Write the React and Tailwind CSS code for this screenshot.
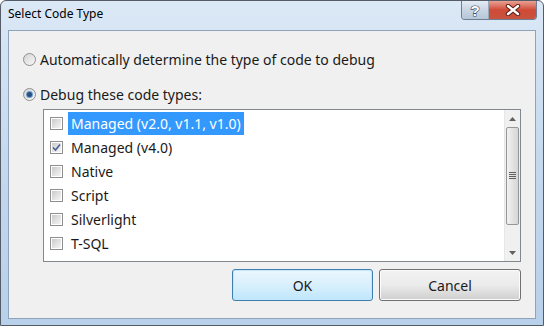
import React from "react";

/* Windows 7 "Select Code Type" dialog, drawn at 544x326. */

const ITEMS = [
  { label: "Managed (v2.0, v1.1, v1.0)", checked: false, selected: true },
  { label: "Managed (v4.0)", checked: true },
  { label: "Native", checked: false },
  { label: "Script", checked: false },
  { label: "Silverlight", checked: false },
  { label: "T-SQL", checked: false },
];

const FONT = { fontFamily: '"Noto Sans", "Open Sans", Arial, sans-serif' };

function Radio({ on }) {
  return (
    <span className="w-[13px] h-[13px] rounded-full border border-[#8e8f8f] bg-gradient-to-br from-[#d4d4d4] to-[#f8f8f8] flex items-center justify-center shrink-0">
      {on && <span className="w-[5px] h-[5px] rounded-full bg-[#2a4f7d] ring-1 ring-[#6b9bd0]" />}
    </span>
  );
}

function Check({ on }) {
  return (
    <span className="w-[13px] h-[13px] border border-[#8e8f8f] bg-white p-px shrink-0 flex">
      <span className="flex-1 bg-gradient-to-br from-[#cbcbcb] to-[#f6f6f6] flex items-center justify-center">
        {on && (
          <svg width="9" height="9" viewBox="0 0 9 9">
            <path d="M1 4.5 L3.5 7 L8 1.5" fill="none" stroke="#4a5f97" strokeWidth="1.6" />
          </svg>
        )}
      </span>
    </span>
  );
}

function Scrollbar() {
  return (
    <div className="w-[16px] bg-[#f0f0f0] flex flex-col items-stretch border-l border-[#e6e6e6]">
      <div className="h-[17px] flex items-center justify-center">
        <svg width="7" height="4" viewBox="0 0 7 4"><path d="M0 4 L3.5 0 L7 4Z" fill="#606060" /></svg>
      </div>
      <div className="h-[98px] mx-px rounded-[2px] border border-[#969696] bg-gradient-to-r from-[#f2f2f2] via-[#e3e3e3] to-[#d6d6d6] flex items-center justify-center">
        <svg width="7" height="8" viewBox="0 0 7 8">
          <path d="M0 0.5H7M0 2.5H7M0 4.5H7M0 6.5H7" stroke="#5f5f5f" strokeWidth="1" />
        </svg>
      </div>
      <div className="flex-1" />
      <div className="h-[17px] flex items-center justify-center">
        <svg width="7" height="4" viewBox="0 0 7 4"><path d="M0 0 L7 0 L3.5 4Z" fill="#606060" /></svg>
      </div>
    </div>
  );
}

export default function App() {
  return (
    <div className="w-[544px] h-[326px] bg-white" style={FONT}>
      <div className="w-[544px] h-[326px] rounded-t-[6px] border border-[#555c68] bg-gradient-to-b from-[#dbe8f6] via-[#c4d8ee] to-[#b8d0ea] flex flex-col">
        {/* title bar */}
        <div className="h-[29px] flex items-start">
          <div className="pl-[7px] pt-[4px] text-[12px] text-black">Select Code Type</div>
          <div className="ml-auto mr-[6px] flex h-[19px] rounded-b-[4px] border border-t-0 border-[#6e7d91] overflow-hidden">
            <div className="w-[27px] bg-gradient-to-b from-[#e4ecf5] via-[#c9d5e3] to-[#b6c6d8] flex items-center justify-center border-r border-[#9aa8b8]">
              <span
                className="text-[15px] font-bold leading-none text-white [-webkit-text-stroke:1.2px_#3b4a5e] [paint-order:stroke_fill]"
                style={{ fontFamily: "Arial, sans-serif" }}
              >
                ?
              </span>
            </div>
            <div className="w-[47px] bg-gradient-to-b from-[#e8a093] via-[#cf4a37] to-[#c7533e] flex items-center justify-center">
              <svg width="16" height="12" viewBox="0 0 16 12">
                <path d="M3 2 L13 10 M13 2 L3 10" stroke="#5a1b12" strokeWidth="4.4" strokeLinecap="round" />
                <path d="M3 2 L13 10 M13 2 L3 10" stroke="#ffffff" strokeWidth="2.4" strokeLinecap="round" />
              </svg>
            </div>
          </div>
        </div>

        {/* client area */}
        <div className="mx-[7px] h-[289px] border border-[#8fa3bb] bg-[#f0f0f0] flex flex-col text-[14px] text-[#1a1a1a]">
          <div className="flex items-center gap-[4px] pl-[14px] mt-[20px] h-[16px]">
            <Radio on={false} />
            <span>Automatically determine the type of code to debug</span>
          </div>
          <div className="flex items-center gap-[4px] pl-[14px] mt-[19px] h-[16px]">
            <Radio on />
            <span>Debug these code types:</span>
          </div>

          <div className="ml-[34px] mr-[14px] mt-[7px] h-[153px] border border-[#828790] bg-white flex overflow-hidden">
            <div className="flex-1 flex flex-col pt-px overflow-hidden">
              {ITEMS.map((it) => (
                <div key={it.label} className="h-[24px] shrink-0 flex items-center pl-[6px]">
                  <Check on={it.checked} />
                  <span
                    className={`ml-[5px] px-[3px] h-[23px] flex items-center ${
                      it.selected ? "bg-[#3399ff] text-white" : ""
                    }`}
                  >
                    {it.label}
                  </span>
                </div>
              ))}
              {/* next row, scrolled out of view */}
              <div className="h-[24px] shrink-0 flex items-center pl-[6px]">
                <Check on={false} />
              </div>
            </div>
            <Scrollbar />
          </div>

          <div className="flex justify-end gap-[6px] mr-[14px] mt-[7px]">
            <button className="w-[141px] h-[32px] rounded-[3px] border border-[#3c7fb1] bg-gradient-to-b from-[#eaf6fd] via-[#d9f0fc] to-[#bee6fd] text-[14px] shadow-[inset_0_0_0_1px_#c7e6f8]">
              OK
            </button>
            <button className="w-[142px] h-[32px] rounded-[3px] border border-[#707070] bg-gradient-to-b from-[#f2f2f2] via-[#ebebeb] to-[#cfcfcf] text-[14px] shadow-[inset_0_0_0_1px_#fcfcfc]">
              Cancel
            </button>
          </div>
        </div>
      </div>
    </div>
  );
}
